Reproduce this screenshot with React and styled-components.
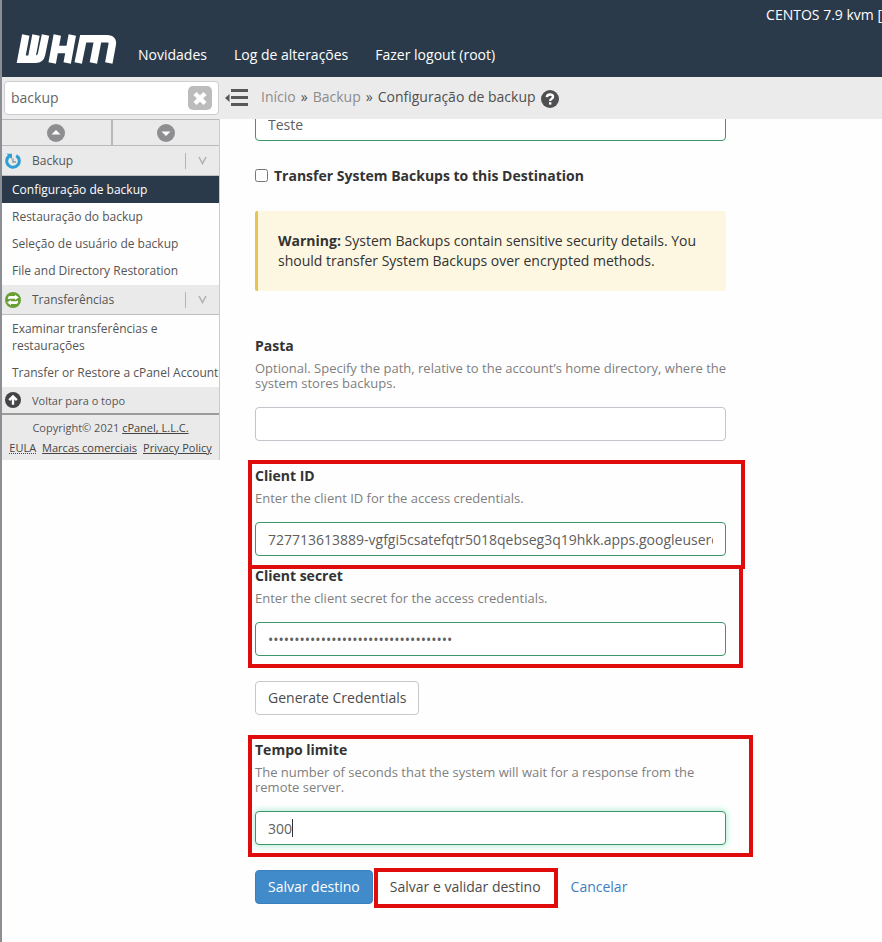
import React, { useState } from "react";
import styled, { createGlobalStyle, css } from "styled-components";

const GlobalStyle = createGlobalStyle`
  *, *::before, *::after { box-sizing: border-box; }
  body {
    margin: 0;
    background: #fefefe;
    color: #333;
    font: 14px/20px "Open Sans", sans-serif;
  }
  button, input { font: inherit; }
`;

const Page = styled.div`
  min-height: 100vh;
  overflow: hidden;
  border-left: 2px solid #8b8e93;
`;

/* ---------- header ---------- */

const Header = styled.header`
  display: flex;
  flex-direction: column;
  justify-content: space-between;
  height: 77px;
  padding: 5px 0 10px 13px;
  background: #2b3a4a;
  color: #fff;
`;

const ServerInfo = styled.div`
  align-self: flex-end;
  white-space: nowrap;
`;

const Brand = styled.div`
  display: flex;
  align-items: flex-end;
  gap: 21px;
`;

const LogoLink = styled.a`
  display: block;
  height: 36px;
  svg { display: block; }
`;

const TopNav = styled.nav`
  display: flex;
  gap: 27px;
  padding-bottom: 2px;
`;

const TopLink = styled.a`
  color: #fff;
  text-decoration: none;
  white-space: nowrap;
`;

/* ---------- tool bar ---------- */

const Toolbar = styled.div`
  position: relative;
  z-index: 1;
  display: flex;
  align-items: center;
  height: 42px;
  background: #ebebec;
`;

const SearchBox = styled.div`
  display: flex;
  align-items: center;
  flex: none;
  width: 215px;
  height: 34px;
  margin-left: 2px;
  padding: 0 6px;
  border: 1px solid #cdcdd0;
  border-radius: 4px;
  background: #fff;
`;

const SearchInput = styled.input`
  flex: 1;
  min-width: 0;
  padding: 0;
  border: 0;
  outline: 0;
  background: none;
  color: #666;
`;

const IconButton = styled.button`
  display: flex;
  align-items: center;
  justify-content: center;
  padding: 0;
  border: 0;
  background: none;
  cursor: pointer;
`;

const CollapseButton = styled(IconButton)`
  margin: 0 13px 0 6px;
`;

const Breadcrumb = styled.nav`
  display: flex;
  align-items: center;
  gap: 5px;
  padding-bottom: 2px;
  color: #505050;
  white-space: nowrap;
  a { color: #8c8c8c; text-decoration: none; }
`;

const HelpButton = styled(IconButton)`
  margin-top: 4px;
`;

/* ---------- side bar ---------- */

const Body = styled.div`
  display: flex;
  align-items: flex-start;
`;

const Sidebar = styled.aside`
  flex: none;
  width: 218px;
  border-right: 1px solid #cbcbcb;
  font-size: 12px;
  line-height: 17px;
`;

const Pager = styled.div`
  display: grid;
  grid-template-columns: 1fr 1fr;
  height: 27px;
  border: solid #b9b9bb;
  border-width: 1px 0;
  background: #ebeaeb;
`;

const PagerButton = styled(IconButton)`
  & + & { border-left: 2px solid #b9b9bb; }
`;

const barStyle = css`
  display: flex;
  align-items: center;
  gap: 11px;
  padding-left: 3px;
  background: #ebeaeb;
  color: #555;
`;

const SectionBar = styled.div`
  ${barStyle}
  height: 30px;
  border-bottom: 1px solid #bfbfbf;
`;

const SectionTitle = styled.h2`
  flex: 1;
  margin: 0;
  font-size: 12px;
  font-weight: 400;
`;

const SectionToggle = styled(IconButton)`
  width: 34px;
  height: 16px;
  border-left: 1px solid #b4b4b4;
`;

const MenuList = styled.ul`
  margin: 0;
  padding: 0 0 1px;
  list-style: none;
`;

const MenuLink = styled.a`
  display: block;
  padding: 5px 0 5px 10px;
  background: ${(p) => (p.$active ? "#2b3a4a" : "transparent")};
  color: ${(p) => (p.$active ? "#fff" : "#555")};
  text-decoration: none;
`;

const BackToTop = styled.a`
  ${barStyle}
  height: 28px;
  border-bottom: 2px solid #9c9c9c;
  font-size: 11px;
  text-decoration: none;
`;

const Legal = styled.footer`
  padding: 3px 0 2px;
  background: #ebeaeb;
  color: #555;
  font-size: 11px;
  line-height: 20px;
  text-align: center;
  a { color: #444; }
`;

const LegalLinks = styled.div`
  display: flex;
  justify-content: center;
  gap: 6px;
`;

const DottedLink = styled.a`
  text-decoration-style: dotted;
`;

/* ---------- form ---------- */

const Content = styled.main`
  flex: 1;
  min-width: 0;
  margin-top: -12px;
  padding: 0 16px 32px 35px;
`;

const Form = styled.form`
  display: flex;
  flex-direction: column;
  align-items: stretch;
  max-width: 471px;
`;

const TextInput = styled.input`
  display: block;
  width: 100%;
  height: 34px;
  padding: 0 12px;
  border: 1px solid ${(p) => (p.$valid ? "#3c9668" : "#c4c4cc")};
  border-radius: 4px;
  outline: 0;
  background: #fff;
  color: #606060;
  box-shadow: ${(p) => (p.$focused ? "0 0 6px 1px #b4ecd6" : "none")};
  caret-color: ${(p) => (p.$focused ? "transparent" : "auto")};
`;

const CheckLabel = styled.label`
  display: flex;
  align-items: center;
  gap: 6px;
  margin: 25px 0;
  font-weight: 700;
  input { width: 13px; height: 13px; margin: 0 0 2px; }
`;

const Warning = styled.div`
  margin-bottom: 45px;
  padding: 20px;
  border-left: 3px solid #e8c552;
  border-radius: 2px;
  background: #fdf7e2;
`;

const Field = styled.div`
  position: relative;
  margin-bottom: ${(p) => (p.$tight ? "10px" : "25px")};
`;

const FieldLabel = styled.label`
  display: block;
  font-weight: 700;
`;

const HelpText = styled.p`
  margin: 5px -8px 16px 0;
  color: #7f7f7f;
  font-size: 13px;
  line-height: 15px;
`;

const Control = styled.div`
  position: relative;
`;

const Caret = styled.span`
  position: absolute;
  top: 8px;
  left: 37px;
  width: 1px;
  height: 18px;
  background: #333;
`;

/* Red frame drawn over a part of the form. */
const Marker = styled.span`
  position: absolute;
  inset: ${(p) => p.$inset};
  border: 4px solid #e00b0b;
  pointer-events: none;
`;

const Button = styled.button`
  height: 34px;
  padding: 0 12px;
  border: 1px solid ${(p) => (p.$primary ? "#3a80bf" : p.$plain ? "#fff" : "#c8c8cc")};
  border-radius: 4px;
  background: ${(p) => (p.$primary ? "#428bca" : "#fff")};
  color: ${(p) => (p.$primary ? "#fff" : "#4c4c4c")};
  white-space: nowrap;
  cursor: pointer;
`;

const GenerateButton = styled(Button)`
  align-self: flex-start;
  margin-bottom: 25px;
`;

const Actions = styled.div`
  display: flex;
  align-items: center;
  gap: 4px;
`;

const Marked = styled.div`
  position: relative;
`;

const CancelLink = styled.a`
  padding: 0 13px;
  color: #3f7fbf;
  text-decoration: none;
`;

/* ---------- drawings ---------- */

const Logo = () => (
  <svg width="102" height="36" viewBox="0 0 102 36" role="img" aria-label="WHM" fill="none" stroke="#fff" strokeWidth="7.5">
    <path d="M10.800 4L6.200 28.200H20.500Q25.500 28.200 26.500 23.500L30.500 4M21 4L16.500 28" />
    <path d="M42.300 4L37.200 32M57.300 4L52.200 32M40 18.500H55" />
    <path d="M63.200 32L68.200 7.700H92Q98.300 7.700 97.200 13.500L93.800 32M83 8L78.400 32" />
  </svg>
);

const CloseIcon = () => (
  <svg width="24" height="24" viewBox="0 0 24 24">
    <rect width="24" height="24" rx="5" fill="#bcbcbd" />
    <path d="M7 7.500L17 17.500M17 7.500L7 17.500" stroke="#fff" strokeWidth="4.500" />
  </svg>
);

const CollapseIcon = () => (
  <svg width="23" height="18" viewBox="0 0 23 18" fill="#58585a">
    <path d="M0 9L4.500 5V13Z" />
    <rect x="6" width="17" height="3" />
    <rect x="6" y="7" width="17" height="3" />
    <rect x="6" y="14" width="17" height="3" />
  </svg>
);

const HelpIcon = () => (
  <svg width="18" height="18" viewBox="0 0 18 18">
    <circle cx="9" cy="9" r="9" fill="#505052" />
    <path d="M5.800 7.200Q6 4.500 9 4.500T12 6.800Q12 8.200 10.400 9Q9.200 9.600 9.200 11" fill="none" stroke="#fff" strokeWidth="2.400" />
    <rect x="8" y="12.200" width="2.400" height="2.400" fill="#fff" />
  </svg>
);

const PagerIcon = ({ down }) => (
  <svg width="18" height="18" viewBox="0 0 18 18">
    <circle cx="9" cy="9" r="9" fill="#8e8e90" />
    <path d={down ? "M4.500 7.500H13.500L9 12Z" : "M4.500 10.500H13.500L9 6Z"} fill="#fff" />
  </svg>
);

const BackupIcon = () => (
  <svg width="16" height="16" viewBox="0 0 16 16" fill="none">
    <path d="M4.800 2.600A6.300 6.300 0 1 0 11.200 2.600" stroke="#2f9fd3" strokeWidth="3" />
    <path d="M1.500 0.800H7V6.200Z" fill="#2f9fd3" />
    <path d="M8 5.500V9H11" stroke="#8a9aa5" strokeWidth="1.500" />
  </svg>
);

const TransferIcon = () => (
  <svg width="16" height="16" viewBox="0 0 16 16">
    <circle cx="8" cy="8" r="8" fill="#6a9f36" />
    <path d="M3 7.200V6Q3 4 5 4H10V2.800L13.800 5.400L10 8V6.800H5M13 8.800V10Q13 12 11 12H6V13.200L2.200 10.600L6 8V9.200H11" fill="#fff" />
  </svg>
);

const TopIcon = () => (
  <svg width="16" height="16" viewBox="0 0 16 16">
    <circle cx="8" cy="8" r="8" fill="#444446" />
    <path d="M8 12.800V5M4.200 8.200L8 4.400L11.800 8.200" fill="none" stroke="#fff" strokeWidth="2.400" />
  </svg>
);

const ChevronIcon = () => (
  <svg width="9" height="9" viewBox="0 0 9 9">
    <path d="M1 1L4.500 7.500L8 1" fill="none" stroke="#b0b0b0" strokeWidth="1.500" />
  </svg>
);

/* ---------- data ---------- */

const topLinks = ["Novidades", "Log de alterações", "Fazer logout (root)"];

const sections = [
  {
    title: "Backup",
    Icon: BackupIcon,
    items: ["Configuração de backup", "Restauração do backup", "Seleção de usuário de backup", "File and Directory Restoration"],
  },
  {
    title: "Transferências",
    Icon: TransferIcon,
    items: ["Examinar transferências e restaurações", "Transfer or Restore a cPanel Account"],
  },
];

function FormField({ id, label, help, type = "text", initial = "", valid, focused, tight, marker }) {
  const [value, setValue] = useState(initial);
  return (
    <Field $tight={tight}>
      <FieldLabel htmlFor={id}>{label}</FieldLabel>
      <HelpText id={`${id}-help`}>{help}</HelpText>
      <Control>
        <TextInput
          id={id}
          type={type}
          value={value}
          aria-describedby={`${id}-help`}
          autoComplete="off"
          onChange={(e) => setValue(e.target.value)}
          $valid={valid}
          $focused={focused}
        />
        {focused && <Caret />}
      </Control>
      {marker && <Marker $inset={marker} />}
    </Field>
  );
}

export default function App() {
  return (
    <Page id="top">
      <GlobalStyle />
      <Header>
        <ServerInfo>CENTOS 7.9 kvm [</ServerInfo>
        <Brand>
          <LogoLink href="#top"><Logo /></LogoLink>
          <TopNav>
            {topLinks.map((t) => <TopLink key={t} href="#top">{t}</TopLink>)}
          </TopNav>
        </Brand>
      </Header>

      <Toolbar>
        <SearchBox>
          <SearchInput aria-label="Pesquisar" defaultValue="backup" />
          <IconButton type="button" aria-label="Limpar"><CloseIcon /></IconButton>
        </SearchBox>
        <CollapseButton type="button" aria-label="Recolher menu"><CollapseIcon /></CollapseButton>
        <Breadcrumb>
          <a href="#top">Início</a>
          <span>»</span>
          <a href="#top">Backup</a>
          <span>»</span>
          <span>Configuração de backup</span>
          <HelpButton type="button" aria-label="Ajuda"><HelpIcon /></HelpButton>
        </Breadcrumb>
      </Toolbar>

      <Body>
        <Sidebar>
          <Pager>
            <PagerButton type="button" aria-label="Anterior"><PagerIcon /></PagerButton>
            <PagerButton type="button" aria-label="Próximo"><PagerIcon down /></PagerButton>
          </Pager>
          {sections.map(({ title, Icon, items }, s) => (
            <section key={title}>
              <SectionBar>
                <Icon />
                <SectionTitle>{title}</SectionTitle>
                <SectionToggle type="button" aria-label={`Recolher ${title}`}><ChevronIcon /></SectionToggle>
              </SectionBar>
              <MenuList>
                {items.map((item, i) => (
                  <li key={item}><MenuLink href="#top" $active={s === 0 && i === 0}>{item}</MenuLink></li>
                ))}
              </MenuList>
            </section>
          ))}
          <BackToTop href="#top"><TopIcon />Voltar para o topo</BackToTop>
          <Legal>
            <div>Copyright© 2021 <a href="#top">cPanel, L.L.C.</a></div>
            <LegalLinks>
              <DottedLink href="#top">EULA</DottedLink>
              <a href="#top">Marcas comerciais</a>
              <a href="#top">Privacy Policy</a>
            </LegalLinks>
          </Legal>
        </Sidebar>

        <Content>
          <Form onSubmit={(e) => e.preventDefault()}>
            <TextInput aria-label="Nome do destino" defaultValue="Teste" $valid />
            <CheckLabel>
              <input type="checkbox" />
              Transfer System Backups to this Destination
            </CheckLabel>
            <Warning role="note">
              <strong>Warning:</strong> System Backups contain sensitive security details. You should transfer System Backups over encrypted methods.
            </Warning>
            <FormField
              id="folder"
              label="Pasta"
              help="Optional. Specify the path, relative to the account’s home directory, where the system stores backups."
            />
            <FormField
              id="client-id"
              label="Client ID"
              help="Enter the client ID for the access credentials."
              initial="727713613889-vgfgi5csatefqtr5018qebseg3q19hkk.apps.googleusercontent.com"
              valid
              tight
              marker="-6px -19px -13px -7px"
            />
            <FormField
              id="client-secret"
              label="Client secret"
              help="Enter the client secret for the access credentials."
              type="password"
              initial="abcdefghijklmnopqrstuvwxyz123456789"
              valid
              marker="-1px -17px -12px -7px"
            />
            <GenerateButton type="button">Generate Credentials</GenerateButton>
            <FormField
              id="timeout"
              label="Tempo limite"
              help="The number of seconds that the system will wait for a response from the remote server."
              initial="300"
              valid
              focused
              marker="-5px -27px -12px -7px"
            />
            <Actions>
              <Button type="submit" $primary>Salvar destino</Button>
              <Marked>
                <Button type="button" $plain>Salvar e validar destino</Button>
                <Marker $inset="-2px -4px -4px -3px" />
              </Marked>
              <CancelLink href="#top">Cancelar</CancelLink>
            </Actions>
          </Form>
        </Content>
      </Body>
    </Page>
  );
}
